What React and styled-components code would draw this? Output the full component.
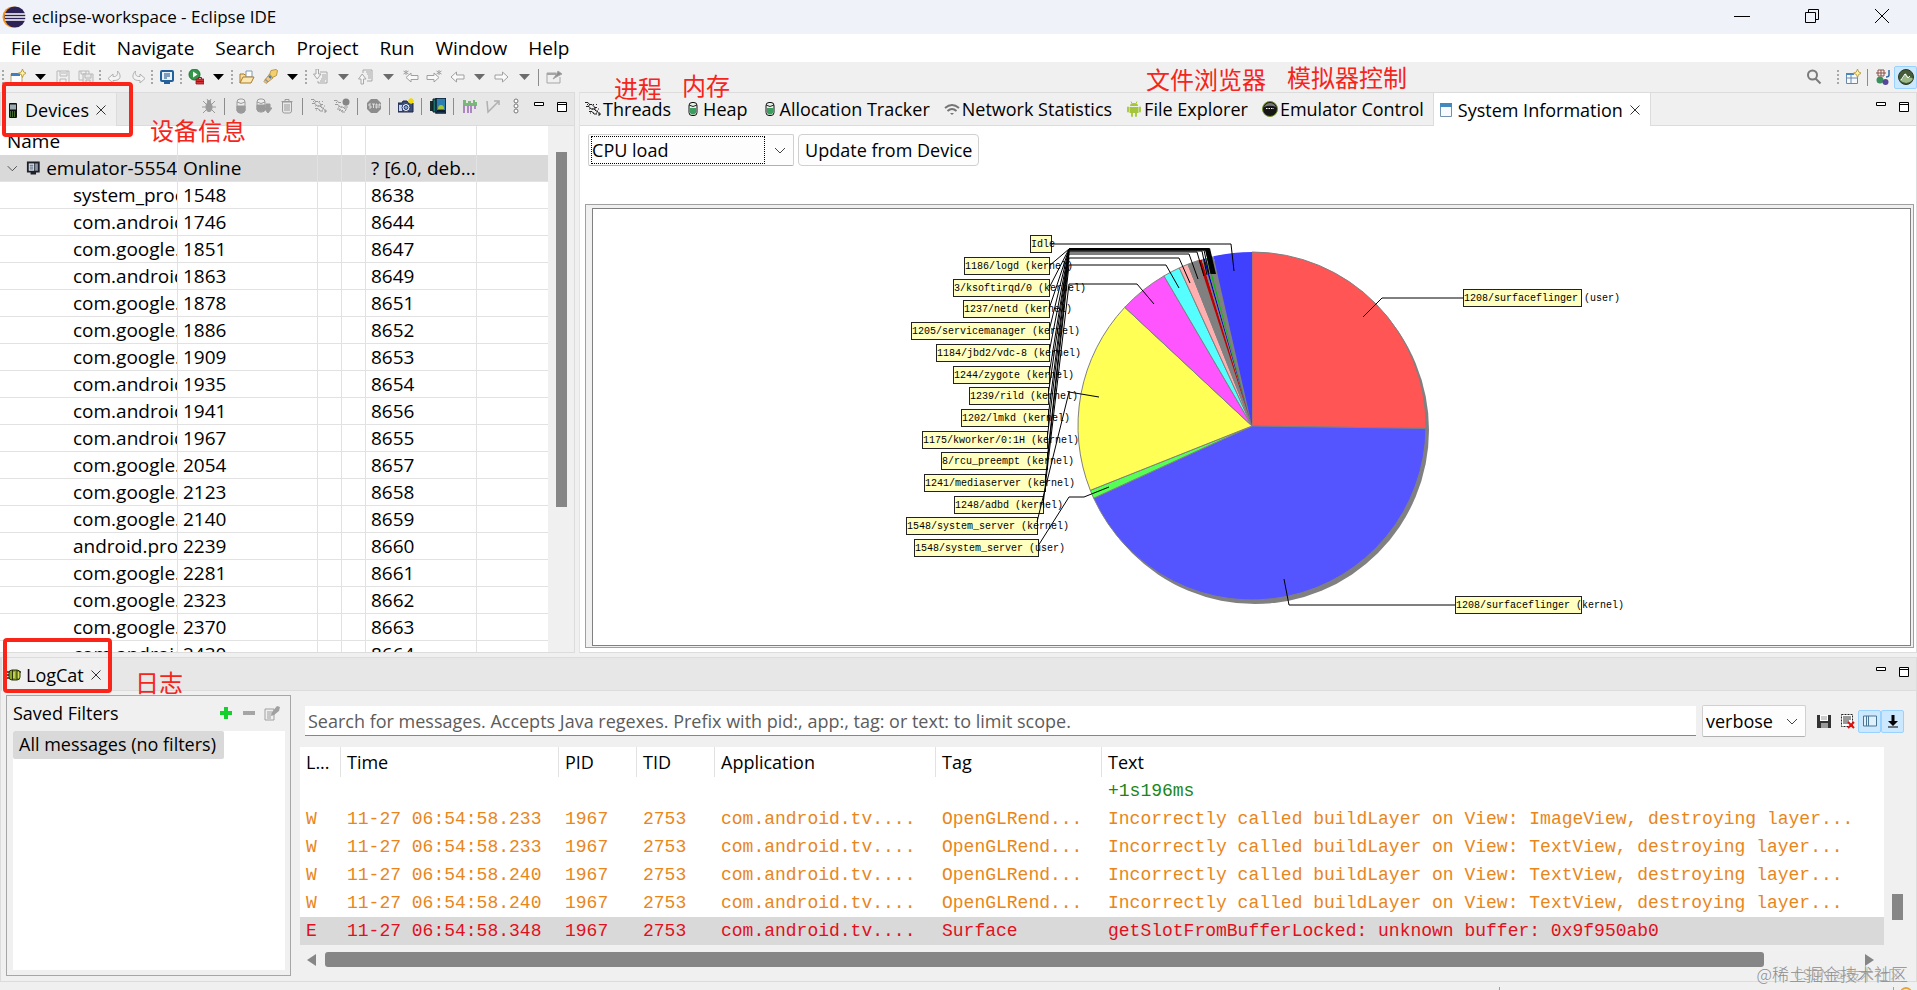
import React from "react";
import styled, { createGlobalStyle, css } from "styled-components";

const GlobalStyle = createGlobalStyle`
  * { box-sizing: border-box; }
  body {
    margin: 0;
    background: #f0f0f0;
    color: #000;
    font-family: "Open Sans", "Noto Sans", "Noto Sans CJK SC", sans-serif;
    font-size: 18px;
    line-height: 26px;
  }
  button, input, select { font: inherit; color: inherit; }
`;

const Screen = styled.div`
  height: 100vh;
  display: flex;
  flex-direction: column;
  overflow: hidden;
`;

const TitleBar = styled.header`
  height: 34px;
  flex: none;
  display: flex;
  align-items: center;
  padding-left: 2px;
  background: #eff3f9;
`;

const Title = styled.h1`
  flex: 1;
  margin: 0 0 0 6px;
  font-size: 17px;
  font-weight: 400;
`;

const WindowButton = styled.button`
  width: 70px;
  height: 34px;
  padding: 0;
  border: 0;
  background: none;
`;

const MenuBar = styled.nav`
  height: 28px;
  flex: none;
  display: flex;
  align-items: center;
  gap: 21px;
  padding-left: 11px;
  background: #fff;
  font-size: 19px;
`;

const MenuItem = styled.button`
  padding: 0;
  border: 0;
  background: none;
`;

const ToolBar = styled.div`
  height: 30px;
  flex: none;
  display: flex;
  align-items: center;
  background: #f0f0f0;
`;

const QuickAccess = styled.div`
  display: flex;
  margin-right: 10px;
`;

const Spacer = styled.div`
  flex: 1;
`;

const IconButton = styled.button`
  flex: none;
  display: flex;
  align-items: center;
  justify-content: center;
  width: ${(props) => (props.$narrow ? 22 : 23)}px;
  height: 23px;
  padding: 0;
  border: 1px solid ${(props) => (props.$active ? "#99d1ff" : "transparent")};
  border-radius: 2px;
  background: ${(props) => (props.$active ? "#cce8ff" : "none")};
`;

const Grip = styled.span`
  flex: none;
  width: 6px;
  height: 16px;
  background: radial-gradient(circle, #a8a8a8 1px, transparent 1px) 0 0 / 6px 4px;
`;

const Rule = styled.span`
  flex: none;
  width: 1px;
  height: 17px;
  margin: 0 ${(props) => (props.$wide ? 4 : 3)}px;
  background: #8c8c8c;
`;

const Workbench = styled.main`
  flex: 1;
  min-height: 0;
  display: flex;
  gap: 4px;
`;

const Panel = styled.section`
  position: relative;
  display: flex;
  flex-direction: column;
  min-width: 0;
  border: 1px solid #dcdcdc;
  border-left-color: #e4e4e4;
  background: #f0f0f0;
`;

const DevicesPanel = styled(Panel)`
  width: 30%;
  flex: none;
  border-left: 0;
`;

const InfoPanel = styled(Panel)`
  flex: 1;
  background: #fff;
`;

const LogPanel = styled(Panel)`
  flex: none;
  margin-top: 4px;
  border-left: 1px solid #dcdcdc;
`;

const StatusBar = styled.footer`
  height: 8px;
  flex: none;
  display: flex;
  align-items: flex-end;
  justify-content: flex-end;
  padding-right: 3px;
`;

const TabBar = styled.div`
  height: 33px;
  flex: none;
  display: flex;
  align-items: stretch;
  border-bottom: 1px solid #dcdcdc;
  background: ${(props) => (props.$plain ? "#f0f0f0" : "#e7e7e7")};
`;

const TabTools = styled.div`
  display: flex;
  align-items: center;
  height: 26px;
  padding-right: 1px;
`;

const Tab = styled.button`
  display: flex;
  align-items: center;
  gap: ${(props) => props.$gap || 2}px;
  padding: 0 9px 0 5px;
  border: 0;
  background: none;
  white-space: nowrap;
  ${(props) =>
    props.$active &&
    css`
      height: 33px;
      padding: 0 7px 0 4px;
      border: solid #dcdcdc;
      border-width: 0 1px;
      background: ${props.$active};
    `}
`;

const Note = styled.span`
  position: absolute;
  z-index: 3;
  left: ${(props) => props.$x}px;
  top: ${(props) => props.$y}px;
  color: #f5251c;
  font-family: "Noto Sans CJK SC", sans-serif;
  font-size: 24px;
  line-height: 24px;
  white-space: nowrap;
  pointer-events: none;
`;

const Marker = styled.span`
  position: absolute;
  z-index: 2;
  left: 2px;
  top: ${(props) => props.$y}px;
  width: ${(props) => props.$width}px;
  height: 55px;
  border: 4px solid #fb2418;
  border-radius: 4px;
  pointer-events: none;
`;

const DeviceBody = styled.div`
  flex: 1;
  min-height: 0;
  display: flex;
  overflow: hidden;
`;

const DeviceScroller = styled.div`
  flex: 1;
  overflow: hidden;
  background: #fff;
`;

const DeviceTable = styled.table`
  width: 100%;
  table-layout: fixed;
  border-collapse: separate;
  border-spacing: 0;
  font-size: 19px;

  th {
    height: 29px;
    text-align: left;
    font-weight: 400;
  }
  td {
    height: 27px;
  }
  th,
  td {
    padding: 0 0 0 5px;
    line-height: 26px;
    overflow: hidden;
    white-space: nowrap;
    border-right: 1px solid #e2e2e2;
  }
  td {
    border-bottom: 1px solid #e2e2e2;
  }
  th:first-child {
    padding-left: 7px;
  }
  th:last-child,
  td:last-child {
    border-right: 0;
  }
  td.child {
    padding-left: 73px;
  }
`;

const SelectedRow = styled.tr`
  background: #d9d9d9;
`;

const TreeCell = styled.div`
  display: flex;
  align-items: center;
  gap: 6px;
`;

const VScroll = styled.div`
  width: ${(props) => props.$width}px;
  flex: none;
  padding: ${(props) => props.$top}px 0 0 8px;
`;

const VThumb = styled.div`
  width: 11px;
  height: ${(props) => props.$length};
  background: #868686;
`;

const Controls = styled.div`
  display: flex;
  align-items: center;
  gap: 4px;
  padding: 8px 8px 38px;
`;

const Combo = styled.label`
  display: flex;
  align-items: center;
  width: ${(props) => props.$width}px;
  height: 32px;
  padding: 0 5px 0 2px;
  border: 1px solid #d0d0d0;
  border-bottom-color: #b0b0b0;
  border-radius: 2px;
  background: #fdfdfd;
`;

const Select = styled.select`
  flex: 1;
  min-width: 0;
  height: 28px;
  margin-right: 7px;
  padding: 0 0 2px;
  appearance: none;
  border: 1px ${(props) => (props.$focused ? "dotted #000" : "solid transparent")};
  border-radius: 0;
  background: none;
  outline: 0;
`;

const PushButton = styled.button`
  height: 32px;
  padding: 0 6px;
  border: 1px solid #d0d0d0;
  border-radius: 4px;
  background: #fdfdfd;
`;

const ChartFrame = styled.div`
  flex: 1;
  min-height: 0;
  margin: 0 2px 4px 5px;
  padding: 3px 2px 1px 6px;
  border: 1px solid #a0a0a0;
  background: #f0f0f0;
`;

const ChartArea = styled.div`
  height: 100%;
  display: flex;
  align-items: center;
  justify-content: center;
  border: 1px solid #808080;
  background: #fff;
  overflow: hidden;

  svg {
    flex: none;
  }
  text {
    font-family: "Liberation Mono", monospace;
    font-size: 10px;
  }
`;

const LogBody = styled.div`
  display: flex;
  gap: 9px;
  padding: 4px 0 5px 5px;
`;

const Filters = styled.aside`
  width: 285px;
  flex: none;
  display: flex;
  flex-direction: column;
  padding: 1px 5px 5px 6px;
  border: 1px solid #a6a6a6;
`;

const FiltersHead = styled.div`
  height: 34px;
  display: flex;
  align-items: center;
  padding: 0 2px 2px 0;
`;

const FilterList = styled.ul`
  flex: 1;
  margin: 0;
  padding: 0;
  list-style: none;
  background: #fff;
`;

const FilterItem = styled.li`
  display: inline-block;
  height: 28px;
  padding: 0 8px 0 6px;
  border-radius: 2px;
  background: #d9d9d9;
`;

const LogMain = styled.div`
  flex: 1;
  min-width: 0;
`;

const SearchRow = styled.div`
  display: flex;
  align-items: center;
  gap: 6px;
  padding: 10px 12px 10px 5px;
`;

const SearchInput = styled.input`
  flex: 1;
  min-width: 0;
  height: 30px;
  padding: 0 3px;
  border: 0;
  border-bottom: 1px solid #868686;
  background: #fff;

  &::placeholder {
    color: #5c5c5c;
    opacity: 1;
  }
`;

const LogTools = styled.div`
  display: flex;
`;

const LogView = styled.div`
  display: flex;
`;

const LogTable = styled.table`
  flex: 1;
  width: 100%;
  min-width: 0;
  table-layout: fixed;
  border-spacing: 0;
  background: #fff;

  th {
    height: 30px;
    font-weight: 400;
    text-align: left;
    border-right: 1px solid #e2e2e2;
  }
  th:last-child {
    border-right: 0;
  }
  th,
  td {
    padding: 0 0 0 6px;
    overflow: hidden;
    white-space: nowrap;
  }
  td {
    height: 28px;
    font-family: "Liberation Mono", monospace;
  }
`;

const LogRow = styled.tr`
  color: ${(props) => props.$color};
  background: ${(props) => (props.$selected ? "#d9d9d9" : "none")};
`;

const HScroll = styled.div`
  display: flex;
  align-items: center;
  gap: 9px;
  padding: 7px 42px 9px 7px;
`;

const HTrack = styled.div`
  flex: 1;
`;

const HThumb = styled.div`
  width: 94%;
  height: 15px;
  border-radius: 3px;
  background: #868686;
`;

const Watermark = styled.div`
  position: absolute;
  right: 8px;
  bottom: -3px;
  z-index: 3;
  color: #8c8c8c;
  font-family: "Noto Sans CJK SC", sans-serif;
  font-size: 17px;
  font-weight: 300;
  line-height: 20px;
`;

const WatermarkUnder = styled.span`
  position: absolute;
  right: 6px;
  top: 0;
  color: #a8a8a8;
  font-size: 14px;
`;

const g = "#9a9a9a";

const icons = {
  down: <path d="M3 5h11l-5.500 6z" fill="#000" />,
  downGray: <path d="M3 5h11l-5.500 6z" fill="#6b6b6b" />,
  newWizard: (
    <>
      <path d="M1 5h11v9H1z" fill="#fdfdfd" stroke="#b9a36a" />
      <path d="M1 4h9v3H1z" fill="#3f7fc0" />
      <path d="M12.500 0l1.200 3 3 1.200-3 1.200-1.200 3-1.200-3-3-1.200 3-1.200z" fill="#fff3a0" stroke="#b0912f" strokeWidth=".8" />
    </>
  ),
  save: (
    <g fill="none" stroke="#b8b8b8">
      <path d="M2 2h12v12H3l-1-1zM5 2v5h7V2M5 14v-4h6v4M6 4h5" />
    </g>
  ),
  saveAll: (
    <g fill="none" stroke="#b8b8b8">
      <path d="M1 2h10v9H1zM3 2v3h5V2" />
      <path d="M5 5h10v9H5z" fill="#e6e6e6" />
      <path d="M7 5v4h6V5M8 14v-3h4v3" />
    </g>
  ),
  undo: <path d="M1 9.500L6 5v2.500c4 .5 5-2 4.500-5.500 4 4 4 10-4.500 9.500V14z" fill="#f4f4f4" stroke="#b0b0b0" />,
  redo: <path d="M15 9.500L10 5v2.500c-4 .5-5-2-4.500-5.500-4 4-4 10 4.500 9.500V14z" fill="#f4f4f4" stroke="#b0b0b0" />,
  console: (
    <>
      <rect x="2" y="2" width="12" height="10" rx="1" fill="#e8f1fb" stroke="#23609c" strokeWidth="2" />
      <path d="M5 5h6M5 7h6M5 9h3" stroke="#174a80" />
      <path d="M5 14h6" stroke="#23609c" strokeWidth="2" />
    </>
  ),
  run: (
    <>
      <circle cx="6.500" cy="5.500" r="5.500" fill="#33964b" stroke="#1c7034" />
      <path d="M5 2.500l4.500 3L5 8.500z" fill="#fff" />
      <path d="M8 10h8v5H8z" fill="#d33034" stroke="#8e1a1e" strokeWidth=".8" />
      <path d="M10.500 10V8.500h3V10M8 12.500h8" fill="none" stroke="#8e1a1e" />
    </>
  ),
  open: (
    <>
      <path d="M1 14V5h4l1 1h6v2" fill="#f7dc9c" stroke="#a87a2c" />
      <path d="M7 2h6v6H7z" fill="#fff" stroke="#7f97b5" />
      <path d="M1 14l3-6h11l-3 6z" fill="#fbe7b2" stroke="#a87a2c" />
    </>
  ),
  torch: (
    <>
      <path d="M9 1.500l5-1 1.500 1-1 5-4 2-3-3z" fill="#f2d06b" stroke="#ad8437" strokeWidth=".8" />
      <path d="M7.500 5l3.500 4-7 5.500-2-2z" fill="#efc77f" stroke="#ad8437" strokeWidth=".8" />
      <path d="M7 7l2 2" stroke="#467ab5" strokeWidth="2" />
      <path d="M3 10l3 3" stroke="#8b93a0" strokeWidth="1.500" />
    </>
  ),
  nextNote: (
    <g fill="none" stroke="#a8a8a8">
      <path d="M7 3h7v11H5v-2M9 6h4M9 8h4M8 10h5M7 12h5" />
      <path d="M3 0h2.500v5H8L4.200 10 .5 5H3z" fill="#f5f5f5" />
    </g>
  ),
  prevNote: (
    <g fill="none" stroke="#a8a8a8">
      <path d="M5 4V1h9v11H9M8 3h5M9 5h4M10 7h3M10 9h3" />
      <path d="M3 15h2.500v-5H8L4.200 5 .5 10H3z" fill="#f5f5f5" />
    </g>
  ),
  lastEdit: (
    <g fill="#f8f8f8" stroke="#a0a0a0">
      <path d="M3 8.500L8 4v2.500h7v4H8V13z" />
      <path d="M3 1v5M.5 2l5 3M5.500 2l-5 3" />
    </g>
  ),
  nextEdit: (
    <g fill="#f8f8f8" stroke="#a0a0a0">
      <path d="M13 8.500L8 4v2.500H1v4h7V13z" />
      <path d="M13 1v5M10.500 2l5 3M15.500 2l-5 3" />
    </g>
  ),
  back: <path d="M2 8l5.500-5v3H15v4H7.500v3z" fill="#fafafa" stroke="#a0a0a0" />,
  forward: <path d="M14 8L8.500 3v3H1v4h7.500v3z" fill="#fafafa" stroke="#a0a0a0" />,
  pin: (
    <g fill="none" stroke="#a5a5a5">
      <path d="M10 4H1v10h13V8" />
      <path d="M1 5h9" strokeWidth="2" />
      <path d="M7 10l3-4 2-4 4 3-4 2z" fill="#8d8d8d" />
    </g>
  ),
  bug: (
    <g stroke={g} fill={g}>
      <ellipse cx="8" cy="9" rx="3" ry="4.500" />
      <circle cx="8" cy="4" r="1.500" />
      <path d="M2 3l4 4M14 3l-4 4M1 9h14M2 15l4-4M14 15l-4-4M6 1l1 2M10 1L9 3" fill="none" />
    </g>
  ),
  heapGray: (
    <g stroke={g} fill="#ededed">
      <rect x="4" y="1" width="8" height="14" rx="3" />
      <path d="M4 8h8v5q-4 4-8 0z" fill={g} />
      <path d="M4 4q4 3 8 0" fill="none" />
    </g>
  ),
  heapDump: (
    <g stroke={g} fill="#ededed">
      <rect x="1" y="1" width="8" height="13" rx="3" />
      <path d="M1 4q4 3 8 0" fill="none" />
      <path d="M1 7h8v5q-4 3-8 0z" fill={g} />
      <path d="M10 6h4v4h2l-4 5-4-5h2z" fill={g} />
    </g>
  ),
  trash: (
    <g stroke={g} fill="none">
      <path d="M3.500 4h9v9q0 2-2 2h-5q-2 0-2-2zM2.500 3.500h11M6 3V1.500h4V3M6 6v7M8 6v7M10 6v7" />
    </g>
  ),
  threadsGray: (
    <g stroke={g} fill="none">
      <path d="M0 1.500h3l1.500 2H7M1 5.500h3l2 2.500h3l2 2h2M4 10.500h3l2 2.500h3" />
      <path d="M7 3.500l3 3h2M9 8l1-2M5 3l-2 3M12 10l3 4M13 14h2v-2" />
      <path d="M2 3.500h12M4 8h12M5 12h10" strokeDasharray="1 2" />
    </g>
  ),
  profile: (
    <g stroke={g} fill="none">
      <path d="M0 2.500h3l1.500 2H7M1 6.500h3l2 2.500h3l2 2h2M3 11h3l2 3h3" />
      <path d="M2 4.500h6M4 9h10M5 12.500h8" strokeDasharray="1 2" />
      <circle cx="12" cy="4" r="3.500" fill="#858585" stroke="none" />
      <path d="M12 7v3" />
    </g>
  ),
  stop: (
    <>
      <path d="M5 1h6l4 4v6l-4 4H5l-4-4V5z" fill="#8c8c8c" />
      <path d="M3 6h2M3 6v2h2v2H3M6 6h3M7.500 6v4M10 6v4h1V6zM13 10V6h1v2" fill="none" stroke="#eee" strokeWidth=".8" />
    </>
  ),
  camera: (
    <>
      <path d="M0 5h4l1-2h4l1 2h5v9H0z" fill="#3c4d78" stroke="#1a2648" />
      <path d="M1 7h3v6H1z" fill="#c9d5ef" />
      <circle cx="8" cy="9.500" r="4" fill="#fff" stroke="#243766" />
      <circle cx="8" cy="9.500" r="2" fill="#88a4da" stroke="#243766" />
      <path d="M13 0v6M10 3h6M11 1l4 4M15 1l-4 4" stroke="#f0d90c" strokeWidth="1.500" />
    </>
  ),
  screens: (
    <>
      <path d="M0 3h3v10H0z" fill="#1c2c2c" />
      <path d="M3 1h4v13H3z" fill="#15726f" stroke="#0b2022" />
      <path d="M6 0h10v15H6z" fill="#2e7fae" stroke="#101d30" strokeWidth="1.500" />
      <path d="M8 11q0-4 3-4t3 4z" fill="#a4c639" />
      <path d="M7 12h8v2H7z" fill="#101d30" />
    </>
  ),
  bars: (
    <g>
      <path d="M1 2h3v3h2V3h3v2h2V2h2v2h2v4H1z" fill="#79b879" />
      <path d="M2 7v8M6 7v8M9 7v8M13 7v4" stroke="#ae86c4" strokeWidth="2" />
    </g>
  ),
  graph: <path d="M2 3l1 11 10-10M9 3h5v4" fill="none" stroke="#b0b0b0" strokeWidth="1.500" />,
  kebab: (
    <g fill="#fff" stroke="#777">
      <circle cx="8" cy="3" r="2" />
      <circle cx="8" cy="8" r="2" />
      <circle cx="8" cy="13" r="2" />
    </g>
  ),
  min: <path d="M3.500 4.500h9v3h-9z" fill="#fff" stroke="#000" />,
  max: <path d="M3.500 4.500h9v9h-9zM3 6.500h10" fill="#fff" stroke="#000" />,
  phone: (
    <>
      <rect x="4" y="1" width="8" height="15" rx="1" fill="#111" />
      <path d="M5 2.500h6v5H5z" fill="#9cabaf" />
      <path d="M5 10h6M5 12h6M5 14h6" stroke="#7cc44c" strokeDasharray="1 1" />
    </>
  ),
  close: <path d="M3.500 3.500l9 9M12.500 3.500l-9 9" stroke="#333" fill="none" />,
  threads: (
    <g stroke="#222" fill="none">
      <path d="M0 1.500h3l1.500 2H7M1 5.500h3l2 2.500h3l2 2h2M4 10.500h3l2 2.500h3" />
      <path d="M7 3.500l3 3h2M9 8l1-2M5 3l-2 3M12 10l3 4M13 14h2v-2" />
      <path d="M2 3.500h12M4 8h12M5 12h10" strokeDasharray="1 2" />
    </g>
  ),
  heap: (
    <>
      <rect x="4" y="1.500" width="8" height="13" rx="3" fill="#e7efe9" stroke="#111" />
      <path d="M5 7h6v5q-3 3-6 0z" fill="#3b9e5f" />
      <path d="M4 4q4 3 8 0" fill="none" stroke="#222" />
    </>
  ),
  wifi: (
    <g fill="none" stroke="#757575" strokeWidth="2">
      <path d="M1 7q7-6 14 0M3.500 10q4.500-4 9 0" />
      <path d="M6 12h4l-2 2z" fill="#757575" stroke="none" />
    </g>
  ),
  android: (
    <g fill="#a4c639">
      <path d="M3.500 6h9v6h-9zM4 5q0-3 4-3t4 3z" />
      <path d="M2 6.500v4M14 6.500v4M6 12v3M10 12v3" stroke="#a4c639" strokeWidth="1.800" strokeLinecap="round" />
      <path d="M5 .5l1 2M11 .5l-1 2" stroke="#a4c639" />
    </g>
  ),
  emulator: (
    <>
      <circle cx="8" cy="8" r="7.500" fill="#161616" stroke="#6f9126" />
      <path d="M2 6a6.500 6.500 0 0112 0q-6-2.500-12 0z" fill="#777" />
      <path d="M4 7.500h8" stroke="#fff" strokeDasharray="1.500 1" />
    </>
  ),
  sysinfo: (
    <>
      <path d="M2.500 1.500h11v13h-11z" fill="#f7fbff" stroke="#7391ae" />
      <path d="M2 1h12v4H2z" fill="#4489bd" />
    </>
  ),
  search: (
    <g fill="none" stroke="#7a7a7a" strokeWidth="2">
      <circle cx="6.500" cy="6" r="4.500" />
      <path d="M9.500 9.500l5 5" />
    </g>
  ),
  perspective: (
    <>
      <path d="M1.500 4.500h11v10h-11zM1.500 9h11M6 4.500v10" fill="#f6f9fc" stroke="#6888a8" />
      <path d="M1 4h8v2H1z" fill="#4b86bd" />
      <path d="M12.500 0l1.200 3 3 1.200-3 1.200-1.200 3-1.200-3-3-1.200 3-1.200z" fill="#fff3a0" stroke="#b0912f" strokeWidth=".8" />
    </>
  ),
  java: (
    <>
      <path d="M3 1h6v6H3zM1 4h10M6 1v6" fill="none" stroke="#8d5146" />
      <path d="M14 1v5q0 2-3 2" fill="none" stroke="#2e67a4" strokeWidth="1.500" />
      <circle cx="5" cy="11" r="3.500" fill="#3b8f5c" />
      <circle cx="10.500" cy="13" r="3" fill="#57479b" />
    </>
  ),
  ddms: (
    <>
      <circle cx="8" cy="8" r="7.500" fill="#455b39" stroke="#283724" />
      <path d="M1.500 11q4-1 5-5t3 1q2 2 5 2v2q-6 6-13 0z" fill="#9bb987" />
      <path d="M3 11l4-6 3 4 2-2" fill="none" stroke="#fff" />
    </>
  ),
  logcat: (
    <>
      <path d="M1 5h4M1 8h4M1 11h4M11 5h4M11 11h3" stroke="#222" strokeWidth="1.500" />
      <rect x="3" y="3" width="11" height="10" rx="3" fill="#8aa62a" stroke="#2b330a" />
      <path d="M6.500 3v10M11 3v10" stroke="#2b330a" />
      <path d="M12.500 5v6M8 5v6" stroke="#d5dd5f" strokeWidth="1.500" />
    </>
  ),
  plus: <path d="M6 2h4v4h4v4h-4v4H6v-4H2V6h4z" fill="#14cf2c" />,
  minus: <path d="M2 6h12v4H2z" fill="#a5a5a5" />,
  edit: (
    <>
      <path d="M1 4h9v11H1z" fill="#eee" stroke="#a0a0a0" />
      <path d="M3 7h5M3 9h5M3 11h4M3 13h4" stroke="#a0a0a0" />
      <path d="M7 11l1-4 5-6 3 1-1 4-5 4z" fill="#a0a0a0" />
    </>
  ),
  saveLog: (
    <>
      <path d="M1 2h14v13H1z" fill="#333" />
      <path d="M4 2h8v6H4z" fill="#fff" />
      <path d="M5 4h6M5 6h6" stroke="#999" />
      <path d="M5 10h7v5H5z" fill="#9b9b9b" />
    </>
  ),
  clearLog: (
    <>
      <path d="M2.500 1.500h11v12h-11z" fill="#fff" stroke="#222" strokeDasharray="2 1" />
      <path d="M4 4h8M4 6h8M4 8h6M4 10h5" stroke="#333" />
      <path d="M9 9l6 6M15 9l-6 6" stroke="#e01010" strokeWidth="2" />
    </>
  ),
  sidePane: <path d="M1.500 3h13v10h-13zM4.500 3v10M6.500 3v10" fill="#dff0fd" stroke="#4a7493" />,
  scrollLock: <path d="M6.500 2h3v6H13l-5 5-5-5h3.500zM3 13.500h10v1H3z" fill="#000" />,
  device: (
    <>
      <path d="M1 1h14v12H1zM5 13h6v2H5z" fill="#1d2028" />
      <path d="M3 3h6v8H3z" fill="#dfe8f4" />
      <path d="M4 5h4M4 7h4M4 9h4" stroke="#47546a" />
      <path d="M10 3h3v8h-3z" fill="#8a95a8" />
    </>
  ),
  chevron: <path d="M3 6l5 5 5-5" fill="none" stroke="#444" />,
};

const Icon = ({ name, size = 16 }) => (
  <svg width={size} height={size} viewBox="0 0 16 16" aria-hidden="true">
    {icons[name]}
  </svg>
);

const EclipseLogo = () => (
  <svg width="24" height="24" viewBox="0 0 24 24" aria-hidden="true">
    <circle cx="11" cy="12" r="10.500" fill="#f7941e" />
    <circle cx="13" cy="12" r="10.500" fill="#2c2255" />
    <path d="M3 9h20M3 12h21M3 15h20" stroke="#fff" strokeWidth="1.300" />
  </svg>
);

// "|" draws a rule, ":" draws a grip
const Tools = ({ items, wide }) =>
  items.map((item, index) => {
    if (item === "|") return <Rule key={index} $wide={wide} />;
    if (item === ":") return <Grip key={index} />;
    return (
      <IconButton key={index} aria-label={item} $narrow={item.startsWith("down")}>
        <Icon name={item} />
      </IconButton>
    );
  });

const menus = ["File", "Edit", "Navigate", "Search", "Project", "Run", "Window", "Help"];

const mainTools = [
  ":", "newWizard", "down", "save", "saveAll",
  ":", "undo", "redo",
  ":", "console",
  ":", "run", "down",
  ":", "open", "torch", "down",
  ":", "nextNote", "downGray", "prevNote", "downGray", "lastEdit", "nextEdit",
  "back", "downGray", "forward", "downGray",
  "|", "pin",
];

const deviceTools = [
  "bug", "|", "heapGray", "heapDump", "trash", "|", "threadsGray", "profile",
  "|", "stop", "|", "camera", "|", "screens", "|", "bars", "graph", "kebab", "min", "max",
];

const processes = [
  ["system_process", 1548, 8638],
  ["com.android", 1746, 8644],
  ["com.google.", 1851, 8647],
  ["com.android", 1863, 8649],
  ["com.google.", 1878, 8651],
  ["com.google.", 1886, 8652],
  ["com.google.", 1909, 8653],
  ["com.android", 1935, 8654],
  ["com.android", 1941, 8656],
  ["com.android", 1967, 8655],
  ["com.google.", 2054, 8657],
  ["com.google.", 2123, 8658],
  ["com.google.", 2140, 8659],
  ["android.process", 2239, 8660],
  ["com.google.", 2281, 8661],
  ["com.google.", 2323, 8662],
  ["com.google.", 2370, 8663],
  ["com.android", 2430, 8664],
];

const infoTabs = [
  ["threads", "Threads"],
  ["heap", "Heap"],
  ["heap", "Allocation Tracker"],
  ["wifi", "Network Statistics"],
  ["android", "File Explorer"],
  ["emulator", "Emulator Control"],
];

// [end angle, fill], clockwise from twelve o'clock
const slices = [
  [90.8, "#ff5555"],
  [245.5, "#5555ff"],
  [248.3, "#55ff55"],
  [313, "#ffff55"],
  [329.6, "#ff55ff"],
  [335.3, "#55ffff"],
  [338.4, "#ffafaf"],
  [342.1, "#808080"],
  [343.2, "#c00000"],
  [343.8, "#808080"],
  [344.3, "#0000c0"],
  [344.8, "#808080"],
  [345.3, "#00c000"],
  [347.2, "#808080"],
  [360, "#4040ff"],
];

// [text, x, y, width]
const labels = [
  ["Idle", 159, 19, 21],
  ["1186/logd (kernel)", 93, 41, 85],
  ["3/ksoftirqd/0 (kernel)", 82, 63, 96],
  ["1237/netd (kernel)", 92, 84, 86],
  ["1205/servicemanager (kernel)", 40, 106, 138],
  ["1184/jbd2/vdc-8 (kernel)", 65, 128, 113],
  ["1244/zygote (kernel)", 82, 150, 96],
  ["1239/rild (kernel)", 98, 171, 79],
  ["1202/lmkd (kernel)", 90, 193, 87],
  ["1175/kworker/0:1H (kernel)", 51, 215, 125],
  ["8/rcu_preempt (kernel)", 70, 236, 106],
  ["1241/mediaserver (kernel)", 53, 258, 121],
  ["1248/adbd (kernel)", 83, 280, 89],
  ["1548/system_server (kernel)", 35, 301, 131],
  ["1548/system_server (user)", 43, 323, 124],
  ["1208/surfaceflinger (user)", 592, 73, 118],
  ["1208/surfaceflinger (kernel)", 584, 380, 126],
];

const leaders = [
  "181,28 360,28 363,55",
  "178,50 198,33 338,33 344,58",
  "178,72 198,33 338,33 343,58",
  "178,93 198,33 337,33 342,58",
  "178,115 198,33 336,33 341,58",
  "178,137 198,34 335,34 340,58",
  "178,159 198,34 333,34 338,58",
  "177,180 198,35 331,35 336,59",
  "177,202 198,36 326,36 333,60",
  "176,224 198,38 318,38 327,63",
  "176,245 198,42 308,42 319,67",
  "174,267 198,49 295,49 308,72",
  "172,289 198,68 266,68 283,88",
  "166,306 198,176 228,181",
  "167,330 198,281 213,281 238,271",
  "592,82 511,82 492,101",
  "584,389 418,389 413,363",
];

const CX = 381;
const CY = 210;
const R = 174;

const pointAt = (deg) => {
  const rad = (deg * Math.PI) / 180;
  return `${CX + R * Math.sin(rad)} ${CY - R * Math.cos(rad)}`;
};

const slicePath = (from, to) =>
  `M${CX} ${CY}L${pointAt(from)}A${R} ${R} 0 ${to - from > 180 ? 1 : 0} 1 ${pointAt(to)}Z`;

const CpuChart = () => (
  <svg width="760" height="420" viewBox="1 1 760 420" role="img" aria-label="CPU load">
    <circle cx={CX + 3} cy={CY + 4} r={R} fill="#808080" />
    {slices.map(([end, fill], index) => (
      <path
        key={end}
        d={slicePath(index ? slices[index - 1][0] : 0, end)}
        fill={fill}
        stroke={index > 7 ? "none" : "#808080"}
      />
    ))}
    <path d="M334 34l5-2 6 26h-5z" fill="#111" />
    {labels.map(([text, x, y, width]) => (
      <rect key={text} x={x + 0.5} y={y + 0.5} width={width} height="17" fill="#ffffc0" stroke="#222" />
    ))}
    {leaders.map((points) => (
      <polyline key={points} points={points} fill="none" stroke="#000" />
    ))}
    <path d="M198 33h140" stroke="#000" strokeWidth="2" />
    {labels.map(([text, x, y]) => (
      <text key={text} x={x + 1} y={y + 12}>
        {text}
      </text>
    ))}
  </svg>
);

const orange = "#e8861c";

const logs = [
  ["06:54:58.233", "ImageView"],
  ["06:54:58.233", "TextView"],
  ["06:54:58.240", "TextView"],
  ["06:54:58.240", "TextView"],
];

const DevicesView = () => (
  <DevicesPanel>
    <TabBar>
      <Tab $active="#f0f0f0" $gap={4}>
        <Icon name="phone" />
        Devices
        <Icon name="close" />
      </Tab>
      <Spacer />
      <TabTools>
        <Tools items={deviceTools} wide />
      </TabTools>
    </TabBar>
    <DeviceBody>
      <DeviceScroller>
        <DeviceTable>
          <colgroup>
            <col width="178" />
            <col width="140" />
            <col width="24" />
            <col width="24" />
            <col width="111" />
            <col />
          </colgroup>
          <thead>
            <tr>
              <th>Name</th>
              <th />
              <th />
              <th />
              <th />
              <th />
            </tr>
          </thead>
          <tbody>
            <SelectedRow>
              <td>
                <TreeCell>
                  <Icon name="chevron" />
                  <Icon name="device" />
                  emulator-5554
                </TreeCell>
              </td>
              <td>Online</td>
              <td />
              <td />
              <td>? [6.0, deb...</td>
              <td />
            </SelectedRow>
            {processes.map(([name, pid, port]) => (
              <tr key={pid}>
                <td className="child">{name}</td>
                <td>{pid}</td>
                <td />
                <td />
                <td>{port}</td>
                <td />
              </tr>
            ))}
          </tbody>
        </DeviceTable>
      </DeviceScroller>
      <VScroll $width={26} $top={26}>
        <VThumb $length="71%" />
      </VScroll>
    </DeviceBody>
    <Marker $y={-11} $width={131} />
    <Note $x={150} $y={25}>设备信息</Note>
  </DevicesPanel>
);

const SystemView = () => (
  <InfoPanel>
    <TabBar $plain>
      {infoTabs.map(([icon, label]) => (
        <Tab key={label}>
          <Icon name={icon} />
          {label}
        </Tab>
      ))}
      <Tab $active="#fff" $gap={4}>
        <Icon name="sysinfo" />
        System Information
        <Icon name="close" />
      </Tab>
      <Spacer />
      <TabTools>
        <Tools items={["min", "max"]} />
      </TabTools>
    </TabBar>
    <Controls>
      <Combo $width={206}>
        <Select aria-label="Information type" $focused>
          <option>CPU load</option>
        </Select>
        <Icon name="chevron" />
      </Combo>
      <PushButton>Update from Device</PushButton>
    </Controls>
    <ChartFrame>
      <ChartArea>
        <CpuChart />
      </ChartArea>
    </ChartFrame>
    <Note $x={34} $y={-17}>进程</Note>
    <Note $x={102} $y={-20}>内存</Note>
    <Note $x={566} $y={-26}>文件浏览器</Note>
    <Note $x={707} $y={-28}>模拟器控制</Note>
  </InfoPanel>
);

const LogCatView = () => (
  <LogPanel>
    <TabBar>
      <Tab $active="#f0f0f0" $gap={4}>
        <Icon name="logcat" />
        LogCat
        <Icon name="close" />
      </Tab>
      <Spacer />
      <TabTools>
        <Tools items={["min", "max"]} />
      </TabTools>
    </TabBar>
    <LogBody>
      <Filters>
        <FiltersHead>
          Saved Filters
          <Spacer />
          <Tools items={["plus", "minus", "edit"]} />
        </FiltersHead>
        <FilterList>
          <FilterItem>All messages (no filters)</FilterItem>
        </FilterList>
      </Filters>
      <LogMain>
        <SearchRow>
          <SearchInput
            aria-label="Search for messages"
            placeholder="Search for messages. Accepts Java regexes. Prefix with pid:, app:, tag: or text: to limit scope."
          />
          <Combo $width={104}>
            <Select aria-label="Log level">
              <option>verbose</option>
            </Select>
            <Icon name="chevron" />
          </Combo>
          <LogTools>
            <Tools items={["saveLog", "clearLog"]} />
            <IconButton aria-label="Show saved filters" $active>
              <Icon name="sidePane" />
            </IconButton>
            <IconButton aria-label="Scroll to end" $active>
              <Icon name="scrollLock" />
            </IconButton>
          </LogTools>
        </SearchRow>
        <LogView>
          <LogTable>
            <colgroup>
              <col width="41" />
              <col width="218" />
              <col width="78" />
              <col width="78" />
              <col width="221" />
              <col width="166" />
              <col />
            </colgroup>
            <thead>
              <tr>
                <th>L...</th>
                <th>Time</th>
                <th>PID</th>
                <th>TID</th>
                <th>Application</th>
                <th>Tag</th>
                <th>Text</th>
              </tr>
            </thead>
            <tbody>
              <LogRow $color="#1a861a">
                <td colSpan={6} />
                <td>+1s196ms</td>
              </LogRow>
              {logs.map(([time, view], index) => (
                <LogRow key={index} $color={orange}>
                  <td>W</td>
                  <td>11-27 {time}</td>
                  <td>1967</td>
                  <td>2753</td>
                  <td>com.android.tv....</td>
                  <td>OpenGLRend...</td>
                  <td>Incorrectly called buildLayer on View: {view}, destroying layer...</td>
                </LogRow>
              ))}
              <LogRow $color="#e01020" $selected>
                <td>E</td>
                <td>11-27 06:54:58.348</td>
                <td>1967</td>
                <td>2753</td>
                <td>com.android.tv....</td>
                <td>Surface</td>
                <td>getSlotFromBufferLocked: unknown buffer: 0x9f950ab0</td>
              </LogRow>
            </tbody>
          </LogTable>
          <VScroll $width={32} $top={147}>
            <VThumb $length="26px" />
          </VScroll>
        </LogView>
        <HScroll>
          <svg width="9" height="12" aria-hidden="true">
            <path d="M9 0v12L0 6z" fill="#868686" />
          </svg>
          <HTrack>
            <HThumb />
          </HTrack>
          <svg width="9" height="12" aria-hidden="true">
            <path d="M0 0v12l9-6z" fill="#868686" />
          </svg>
        </HScroll>
      </LogMain>
    </LogBody>
    <Marker $y={-20} $width={109} />
    <Note $x={134} $y={12}>日志</Note>
    <Watermark>
      <WatermarkUnder>CSDN @技术社区</WatermarkUnder>
      @稀土掘金技术社区
    </Watermark>
  </LogPanel>
);

const App = () => (
  <Screen>
    <GlobalStyle />
    <TitleBar>
      <EclipseLogo />
      <Title>eclipse-workspace - Eclipse IDE</Title>
      <WindowButton aria-label="Minimize">
        <svg width="16" height="16">
          <path d="M0 8.500h16" stroke="#000" />
        </svg>
      </WindowButton>
      <WindowButton aria-label="Restore">
        <svg width="16" height="16">
          <path d="M1.500 4.500h10v10h-10zM4.500 4V1.500h10v10H12" fill="none" stroke="#000" />
        </svg>
      </WindowButton>
      <WindowButton aria-label="Close">
        <svg width="16" height="16">
          <path d="M1 1l14 14M15 1L1 15" stroke="#000" />
        </svg>
      </WindowButton>
    </TitleBar>
    <MenuBar>
      {menus.map((menu) => (
        <MenuItem key={menu}>{menu}</MenuItem>
      ))}
    </MenuBar>
    <ToolBar>
      <Tools items={mainTools} />
      <Spacer />
      <QuickAccess>
        <Tools items={["search"]} />
      </QuickAccess>
      <Tools items={[":", "perspective", "|", "java"]} />
      <IconButton aria-label="DDMS" $active>
        <Icon name="ddms" />
      </IconButton>
    </ToolBar>
    <Workbench>
      <DevicesView />
      <SystemView />
    </Workbench>
    <LogCatView />
    <StatusBar>
      <svg width="416" height="3" aria-hidden="true">
        <path d="M1.500 0v3M395.500 0v3" stroke="#a0a0a0" />
        <circle cx="408" cy="6" r="5" fill="none" stroke="#e8a33d" strokeWidth="2" />
      </svg>
    </StatusBar>
  </Screen>
);

export default App;
